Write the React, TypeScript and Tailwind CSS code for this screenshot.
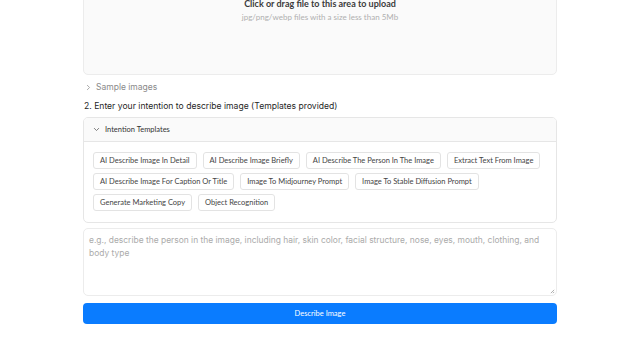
import React from "react";

const tags = [
  ["AI Describe Image In Detail", "AI Describe Image Briefly", "AI Describe The Person In The Image", "Extract Text From Image"],
  ["AI Describe Image For Caption Or Title", "Image To Midjourney Prompt", "Image To Stable Diffusion Prompt"],
  ["Generate Marketing Copy", "Object Recognition"],
];

export default function App() {
  return (
    <div className="w-[640px] h-[360px] overflow-hidden bg-white relative font-['Inter',sans-serif]">
      <div className="w-[474px] ml-[83px] flex flex-col">
        {/* upload box */}
        <div className="h-[85px] -mt-[10px] rounded-[5px] border border-[#ececec] bg-[#fafafa] flex flex-col items-center font-['Lato',sans-serif]">
          <div className="mt-[7px] text-[9px] leading-[11px] font-bold text-[#3a3a3a]">
            Click or drag file to this area to upload
          </div>
          <div className="mt-[3px] text-[8px] leading-[10px] text-[#b0b0b0]">
            jpg/png/webp files with a size less than 5Mb
          </div>
        </div>

        {/* sample images */}
        <div className="mt-[7px] flex items-center h-[11px] pl-[2px] text-[#8a8a8a]">
          <svg width="7" height="7" viewBox="0 0 10 10" className="mr-[4px]">
            <path d="M3 1.5 L6.5 5 L3 8.5" fill="none" stroke="#999" strokeWidth="1.2" />
          </svg>
          <span className="text-[8.5px] leading-[11px]">Sample images</span>
        </div>

        {/* title */}
        <div className="mt-[7px] text-[8.6px] leading-[13px] text-[#1f1f1f] pl-[1px]">
          2. Enter your intention to describe image (Templates provided)
        </div>

        {/* templates box */}
        <div className="mt-[4px] rounded-[5px] border border-[#e6e6e6] overflow-hidden font-['Lato',sans-serif]">
          <div className="h-[24px] bg-[#fafafa] border-b border-[#e6e6e6] flex items-center pl-[9px]">
            <svg width="7" height="7" viewBox="0 0 10 10" className="mr-[5px]">
              <path d="M1.5 3 L5 6.5 L8.5 3" fill="none" stroke="#666" strokeWidth="1.2" />
            </svg>
            <span className="text-[7.5px] leading-[10px] text-[#333]">Intention Templates</span>
          </div>
          <div className="px-[9px] pt-[10px] pb-[11px] flex flex-col gap-[4px]">
            {tags.map((row, i) => (
              <div key={i} className="flex gap-[6px]">
                {row.map((t) => (
                  <div
                    key={t}
                    className="h-[17px] px-[6px] flex items-center rounded-[3px] border border-[#e3e3e3] bg-white text-[7.5px] text-[#444] whitespace-nowrap"
                  >
                    {t}
                  </div>
                ))}
              </div>
            ))}
          </div>
        </div>

        {/* textarea */}
        <div className="mt-[5px] h-[68px] rounded-[5px] border border-[#ececec] bg-white relative px-[5px] pt-[5px]">
          <div className="text-[8.45px] leading-[13px] text-[#ababab]">
            e.g., describe the person in the image, including hair, skin color, facial structure, nose, eyes, mouth, clothing, and body type
          </div>
          <svg width="5" height="5" viewBox="0 0 6 6" className="absolute right-[1px] bottom-[1px]">
            <path d="M1 5 L5 1 M3.5 5 L5 3.5" stroke="#888" strokeWidth="0.8" />
          </svg>
        </div>

        {/* button */}
        <div className="mt-[7px] h-[21px] rounded-[4px] bg-[#0a7cff] flex items-center justify-center text-white text-[7.5px] font-['Lato',sans-serif]">
          Describe Image
        </div>
      </div>
    </div>
  );
}
